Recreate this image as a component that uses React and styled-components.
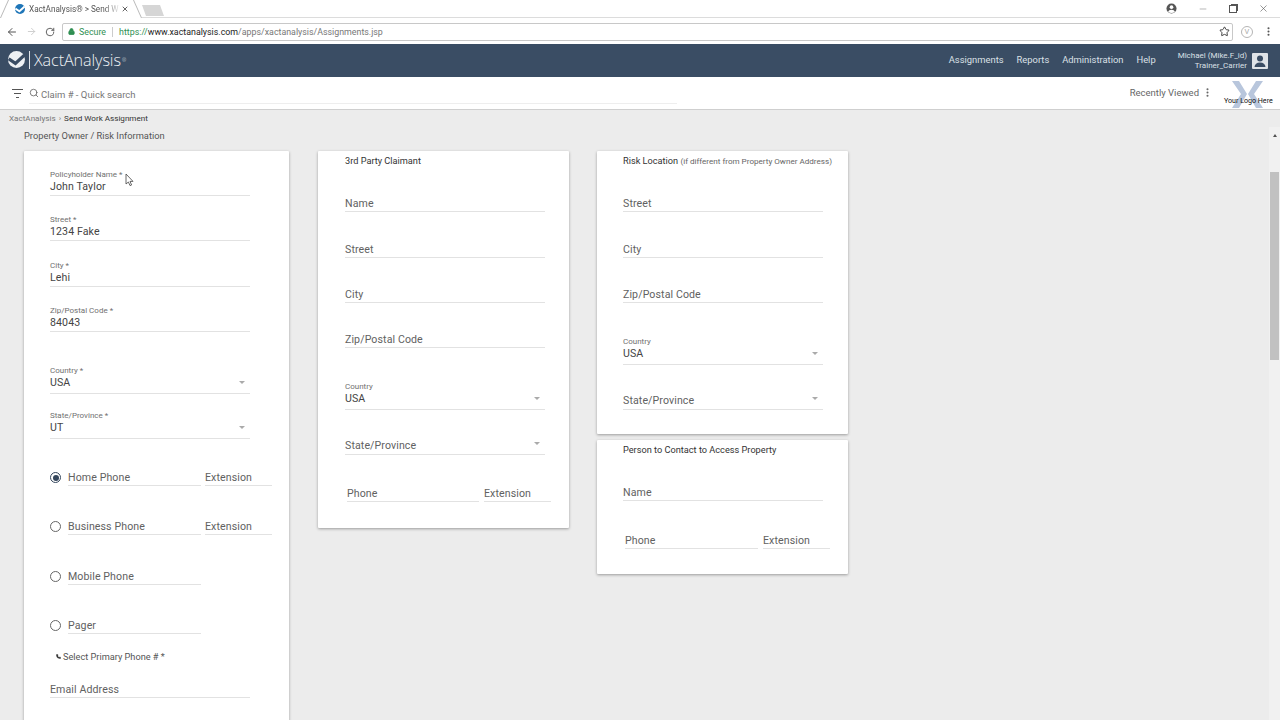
import React from "react";
import styled, { createGlobalStyle } from "styled-components";
import { Search, ArrowLeft, ArrowRight, RotateCw, Lock, Star, MoreVertical, X, Minus, Phone } from "lucide-react";

const Global = createGlobalStyle`
  html, body { margin: 0; padding: 0; height: 720px; overflow: hidden; background: #ececec; }
  body { font-family: Roboto, "Liberation Sans", sans-serif; color: #424242; }
`;

const Page = styled.div`
  width: 1280px;
  height: 720px;
  display: flex;
  flex-direction: column;
  overflow: hidden;
  position: relative;
`;

/* browser chrome */
const TabStrip = styled.div`
  height: 18px;
  background: #fff;
  display: flex;
  align-items: flex-start;
  padding-left: 7px;
  flex-shrink: 0;
  border-bottom: 1px solid #dcdcdc;
  box-sizing: border-box;
`;
const Tab = styled.div`
  width: 128px;
  height: 18px;
  box-sizing: border-box;
  padding-left: 8px;
  display: flex;
  align-items: center;
  position: relative;
  background: #fff;
  font-size: 8.2px;
  color: #555;
  white-space: nowrap;
  &::before,
  &::after {
    content: "";
    position: absolute;
    top: 0;
    height: 18px;
    width: 9px;
    background: #fff;
    box-sizing: border-box;
  }
  &::before {
    left: -3px;
    border-left: 1px solid #b9b9b9;
    transform: skewX(-24deg);
  }
  &::after {
    right: -3px;
    border-right: 1px solid #b9b9b9;
    transform: skewX(24deg);
  }
`;
const TabFavicon = styled.span`
  display: flex;
  z-index: 1;
  margin-right: 4px;
`;
const TabTitle = styled.span`
  width: 92px;
  flex-shrink: 0;
  z-index: 1;
  -webkit-mask-image: linear-gradient(to right, #000 82%, transparent 100%);
  mask-image: linear-gradient(to right, #000 82%, transparent 100%);
`;
const TabClose = styled.span`
  display: flex;
  z-index: 1;
  color: #444;
`;
const NewTab = styled.div`
  width: 18px;
  height: 11px;
  margin: 5px 0 0 9px;
  background: #d6d6d6;
  transform: skewX(20deg);
`;
const WinControls = styled.div`
  margin-left: auto;
  display: flex;
  align-items: center;
  gap: 21px;
  height: 17px;
  padding-right: 11px;
  color: #555;
`;
const RestoreIcon = styled.div`
  width: 6px;
  height: 6px;
  border: 1px solid #555;
  box-shadow: 1.5px -1.5px 0 -0.5px #555;
`;
const Toolbar = styled.div`
  height: 26px;
  box-sizing: border-box;
  padding: 1px 0 0 6px;
  background: #fff;
  display: flex;
  align-items: center;
  flex-shrink: 0;
  color: #555;
`;
const NavButtons = styled.div`
  display: flex;
  align-items: center;
  gap: 8px;
  width: 56px;
`;
const Omnibox = styled.div`
  width: 1171px;
  height: 18px;
  box-sizing: border-box;
  border: 1px solid #c8c8c8;
  border-radius: 2px;
  display: flex;
  align-items: center;
  padding: 0 2px 0 5px;
  font-size: 8.85px;
`;
const Secure = styled.span`
  color: #2f8f52;
  display: flex;
  align-items: center;
  gap: 4px;
  padding-right: 6px;
  margin-right: 6px;
  border-right: 1px solid #ccc;
`;
const UrlGreen = styled.span`
  color: #2f8f52;
`;
const UrlDark = styled.span`
  color: #222;
`;
const UrlGrey = styled.span`
  color: #777;
`;
const StarWrap = styled.span`
  margin-left: auto;
  display: flex;
  color: #333;
`;
const ExtButtons = styled.div`
  display: flex;
  align-items: center;
  gap: 10px;
  margin-left: 8px;
  color: #555;
`;
const VBadge = styled.span`
  width: 10px;
  height: 10px;
  border: 1px solid #b5b5b5;
  border-radius: 50%;
  color: #aaa;
  font-size: 7.5px;
  line-height: 10px;
  text-align: center;
`;

/* app header */
const Header = styled.header`
  height: 33px;
  background: #3a4d64;
  display: flex;
  align-items: center;
  padding: 0 12px 0 8px;
  color: #fff;
  flex-shrink: 0;
`;
const Brand = styled.div`
  display: flex;
  align-items: center;
  padding-bottom: 2px;
  font-family: "Open Sans", Roboto, sans-serif;
  font-size: 16.2px;
  font-weight: 300;
  letter-spacing: -0.1px;
  color: #eef1f4;
`;
const BrandBar = styled.span`
  width: 1px;
  height: 18px;
  background: #dfe4ea;
  margin: 0 4px 0 4px;
`;
const Trademark = styled.sup`
  font-size: 5px;
  margin-left: 1px;
`;
const Nav = styled.nav`
  margin-left: auto;
  display: flex;
  gap: 13px;
  padding: 0 22px 2px 0;
  font-size: 9.4px;
  color: #dbe0e6;
`;
const User = styled.div`
  display: flex;
  align-items: center;
  gap: 5px;
`;
const UserText = styled.div`
  text-align: right;
  font-size: 8px;
  line-height: 9.5px;
  color: #dbe0e6;
`;
const Avatar = styled.div`
  width: 16px;
  height: 16px;
  background: #dfe3e8;
  border-radius: 1px;
  display: flex;
  align-items: center;
  justify-content: center;
  overflow: hidden;
`;

const SearchBar = styled.div`
  height: 33px;
  box-sizing: border-box;
  background: #fff;
  border-bottom: 1.5px solid #cfcfcf;
  display: flex;
  align-items: center;
  padding-left: 11px;
  position: relative;
  flex-shrink: 0;
`;
const SearchField = styled.div`
  width: 648px;
  height: 17px;
  margin: 4px 0 0 5px;
  display: flex;
  align-items: center;
  gap: 2px;
  border-bottom: 1px solid #eee;
  font-size: 9.5px;
  color: #777;
`;
const SearchGlyph = styled.span`
  display: flex;
  margin-top: -4px;
`;
const Recent = styled.div`
  margin: 0 67px 2px auto;
  display: flex;
  align-items: center;
  gap: 3px;
  font-size: 9.5px;
  color: #666;
`;
const LogoOverlay = styled.div`
  position: absolute;
  left: 1224px;
  top: 4px;
  width: 50px;
  height: 27px;
  padding-left: 8px;
  box-sizing: border-box;
  display: flex;
`;
const LogoText = styled.span`
  position: absolute;
  top: 15px;
  left: 0;
  font-size: 7.1px;
  color: #111;
  white-space: nowrap;
`;

const Crumbs = styled.div`
  height: 17px;
  box-sizing: border-box;
  padding: 0 0 2px 9px;
  display: flex;
  align-items: center;
  font-size: 8.1px;
  color: #777;
  gap: 3px;
  flex-shrink: 0;
`;
const CrumbNow = styled.span`
  color: #333;
`;

const Body = styled.div`
  flex: 1;
  display: flex;
  min-height: 0;
`;
const Content = styled.main`
  flex: 1;
  padding-left: 24px;
  min-width: 0;
`;
const SectionTitle = styled.div`
  font-size: 9.3px;
  line-height: 12px;
  height: 24px;
  padding-top: 3px;
  box-sizing: border-box;
  color: #555;
`;
const Columns = styled.div`
  display: flex;
  align-items: flex-start;
  gap: 28px;
`;
const Stack = styled.div`
  display: flex;
  flex-direction: column;
  gap: 6px;
`;
const Card = styled.section`
  width: ${(p) => p.$w}px;
  height: ${(p) => p.$h}px;
  box-sizing: border-box;
  background: #fff;
  border-radius: 1px;
  box-shadow: 0 1px 3px rgba(0, 0, 0, 0.35);
  padding-left: ${(p) => p.$pad || 26}px;
  margin-right: ${(p) => p.$mr || 0}px;
  flex-shrink: 0;
`;
const CardTitle = styled.div`
  height: 16px;
  box-sizing: border-box;
  padding-top: 4px;
  font-size: 9.2px;
  line-height: 11px;
  color: #333;
  white-space: nowrap;
`;
const TitleNote = styled.span`
  font-size: 8.1px;
  color: #666;
`;

const FieldBox = styled.div`
  width: ${(p) => p.$w || 200}px;
  height: ${(p) => p.$h}px;
  box-sizing: border-box;
  flex-shrink: 0;
  display: flex;
  flex-direction: column;
  justify-content: flex-end;
  border-bottom: 1px solid #e2e2e2;
  position: relative;
  padding-bottom: ${(p) => p.$pb}px;
`;
const FieldLabel = styled.div`
  font-size: 8px;
  line-height: 10px;
  color: #707070;
`;
const FieldValue = styled.div`
  font-size: 10.6px;
  line-height: 13px;
  letter-spacing: 0.1px;
  color: ${(p) => (p.$empty ? "#616161" : "#444")};
  white-space: nowrap;
`;
const Caret = styled.span`
  position: absolute;
  right: 5px;
  bottom: 9px;
  width: 0;
  height: 0;
  border-left: 3.5px solid transparent;
  border-right: 3.5px solid transparent;
  border-top: 3.5px solid #aaa;
`;
const PhoneRow = styled.div`
  height: ${(p) => p.$h}px;
  display: flex;
  align-items: flex-end;
  gap: ${(p) => p.$gap || 4}px;
  margin-left: ${(p) => p.$ml || 0}px;
`;
const Radio = styled.span`
  width: 9px;
  height: 9px;
  border: 1px solid ${(p) => (p.$on ? "#34465c" : "#666")};
  border-radius: 50%;
  margin: 0 3px 3px 0;
  display: flex;
  align-items: center;
  justify-content: center;
  flex-shrink: 0;
  &::after {
    content: "";
    width: 6px;
    height: 6px;
    border-radius: 50%;
    background: ${(p) => (p.$on ? "#34465c" : "transparent")};
  }
`;
const PrimaryNote = styled.div`
  height: 16px;
  margin: 14px 0 0 6px;
  display: flex;
  align-items: center;
  gap: 2px;
  font-size: 9.2px;
  color: #555;
`;

const Scrollbar = styled.aside`
  width: 11px;
  background: #f1f1f1;
  display: flex;
  flex-direction: column;
  align-items: center;
`;
const ScrollArrow = styled.span`
  width: 0;
  height: 0;
  margin: 7px 0 35px;
  border-left: 2.5px solid transparent;
  border-right: 2.5px solid transparent;
  border-bottom: 3px solid #505050;
`;
const ScrollThumb = styled.div`
  width: 9px;
  height: 188px;
  background: #c1c1c1;
`;
const Cursor = styled.svg`
  position: absolute;
  left: 125px;
  top: 173px;
`;

const CheckLogo = ({ size, bg, fg }) => (
  <svg width={size} height={size} viewBox="0 0 24 24">
    <circle cx="12" cy="12" r="12" fill={bg} />
    <path d="M1 11 L10.5 17.5 L23 6" fill="none" stroke={fg} strokeWidth="4.5" />
  </svg>
);

const Field = ({ label, value, h, w, select }) => {
  let pb = label ? 2 : 1;
  if (select) pb = label ? 4 : 2;
  return (
    <FieldBox $h={h} $w={w} $pb={pb}>
      {label && <FieldLabel>{label}</FieldLabel>}
      <FieldValue $empty={!label}>{value}</FieldValue>
      {select && <Caret />}
    </FieldBox>
  );
};

const PhoneLine = ({ name, on, ext, h }) => (
  <PhoneRow $h={h}>
    <Radio $on={on} />
    <Field value={name} h={20} w={133} />
    {ext ? <Field value="Extension" h={20} w={67} /> : null}
  </PhoneRow>
);

export default function App() {
  return (
    <Page>
      <Global />
      <TabStrip>
        <Tab>
          <TabFavicon>
            <CheckLogo size={10} bg="#1f76b8" fg="#fff" />
          </TabFavicon>
          <TabTitle>XactAnalysis® &gt; Send W</TabTitle>
          <TabClose>
            <X size={8} strokeWidth={2.5} />
          </TabClose>
        </Tab>
        <NewTab />
        <WinControls>
          <svg width="11" height="11" viewBox="0 0 24 24">
            <circle cx="12" cy="12" r="11" fill="#555" />
            <circle cx="12" cy="9" r="4" fill="#fff" />
            <path d="M4.5 19 Q6 14.5 12 14.5 Q18 14.5 19.5 19 Q16 22 12 22 Q8 22 4.5 19Z" fill="#fff" />
          </svg>
          <Minus size={10} color="#aaa" />
          <RestoreIcon />
          <X size={11} strokeWidth={1.3} />
        </WinControls>
      </TabStrip>
      <Toolbar>
        <NavButtons>
          <ArrowLeft size={12} strokeWidth={2} />
          <ArrowRight size={11} color="#ccc" />
          <RotateCw size={10} strokeWidth={2.2} />
        </NavButtons>
        <Omnibox>
          <Secure>
            <Lock size={7} fill="#2f8f52" strokeWidth={3} />
            Secure
          </Secure>
          <UrlGreen>https://</UrlGreen>
          <UrlDark>www.xactanalysis.com</UrlDark>
          <UrlGrey>/apps/xactanalysis/Assignments.jsp</UrlGrey>
          <StarWrap>
            <Star size={11} />
          </StarWrap>
        </Omnibox>
        <ExtButtons>
          <VBadge>V</VBadge>
          <MoreVertical size={11} strokeWidth={2.5} />
        </ExtButtons>
      </Toolbar>
      <Header>
        <Brand>
          <CheckLogo size={17} bg="#eef1f4" fg="#3a4d64" />
          <BrandBar />
          XactAnalysis
          <Trademark>®</Trademark>
        </Brand>
        <Nav>
          <span>Assignments</span>
          <span>Reports</span>
          <span>Administration</span>
          <span>Help</span>
        </Nav>
        <User>
          <UserText>
            Michael (Mike.F_id)
            <br />
            Trainer_Carrier
          </UserText>
          <Avatar>
            <svg width="14" height="14" viewBox="0 0 14 14">
              <circle cx="7" cy="4.5" r="3" fill="#3a4d64" />
              <path d="M1.5 13 Q2 8.5 7 8.5 Q12 8.5 12.5 13Z" fill="#3a4d64" />
            </svg>
          </Avatar>
        </User>
      </Header>
      <SearchBar>
        <svg width="13" height="11" viewBox="0 0 13 11">
          <path d="M1 1.5 H12 M3 5.5 H10 M5 9.5 H8" stroke="#555" strokeWidth="1.2" fill="none" />
        </svg>
        <SearchField>
          <SearchGlyph>
            <Search size={10} color="#666" />
          </SearchGlyph>
          Claim # - Quick search
        </SearchField>
        <Recent>
          Recently Viewed
          <MoreVertical size={11} strokeWidth={2.5} />
        </Recent>
        <LogoOverlay>
          <svg width="31" height="27" viewBox="0 0 31 27">
            <path d="M0 0 H7 L15 13 L7 27 H0 L9 13Z" fill="#b8c6dc" />
            <path d="M31 0 H24 L16 13 L24 27 H31 L22 13Z" fill="#b8c6dc" />
          </svg>
          <LogoText>Your Logo Here</LogoText>
        </LogoOverlay>
      </SearchBar>
      <Crumbs>
        XactAnalysis <span>›</span> <CrumbNow>Send Work Assignment</CrumbNow>
      </Crumbs>
      <Body>
        <Content>
          <SectionTitle>Property Owner / Risk Information</SectionTitle>
          <Columns>
            <Card $w={265} $h={640} $mr={1}>
              <Field label="Policyholder Name *" value="John Taylor" h={45} />
              <Field label="Street *" value="1234 Fake" h={45} />
              <Field label="City *" value="Lehi" h={46} />
              <Field label="Zip/Postal Code *" value="84043" h={45} />
              <Field label="Country *" value="USA" h={62} select />
              <Field label="State/Province *" value="UT" h={45} select />
              <PhoneLine name="Home Phone" on ext h={47} />
              <PhoneLine name="Business Phone" ext h={49} />
              <PhoneLine name="Mobile Phone" h={50} />
              <PhoneLine name="Pager" h={49} />
              <PrimaryNote>
                <Phone size={5} fill="#222" color="#222" />
                Select Primary Phone # *
              </PrimaryNote>
              <Field value="Email Address" h={34} />
            </Card>
            <Card $w={251} $h={377} $pad={27}>
              <CardTitle>3rd Party Claimant</CardTitle>
              <Field value="Name" h={45} />
              <Field value="Street" h={46} />
              <Field value="City" h={45} />
              <Field value="Zip/Postal Code" h={45} />
              <Field label="Country" value="USA" h={62} select />
              <Field value="State/Province" h={45} select />
              <PhoneRow $h={47} $gap={5} $ml={2}>
                <Field value="Phone" h={20} w={132} />
                <Field value="Extension" h={20} w={67} />
              </PhoneRow>
            </Card>
            <Stack>
              <Card $w={251} $h={283}>
                <CardTitle>
                  Risk Location <TitleNote>(if different from Property Owner Address)</TitleNote>
                </CardTitle>
                <Field value="Street" h={45} />
                <Field value="City" h={46} />
                <Field value="Zip/Postal Code" h={45} />
                <Field label="Country" value="USA" h={62} select />
                <Field value="State/Province" h={45} select />
              </Card>
              <Card $w={251} $h={134}>
                <CardTitle>Person to Contact to Access Property</CardTitle>
                <Field value="Name" h={45} />
                <PhoneRow $h={48} $gap={5} $ml={2}>
                  <Field value="Phone" h={20} w={133} />
                  <Field value="Extension" h={20} w={67} />
                </PhoneRow>
              </Card>
            </Stack>
          </Columns>
        </Content>
        <Scrollbar>
          <ScrollArrow />
          <ScrollThumb />
        </Scrollbar>
      </Body>
      <Cursor width="9" height="14" viewBox="0 0 9 14">
        <path d="M1 1 L1 11 L3.4 9 L5 12.6 L6.6 12 L5 8.4 L8 8.4Z" fill="#fff" stroke="#444" strokeWidth="0.8" />
      </Cursor>
    </Page>
  );
}
